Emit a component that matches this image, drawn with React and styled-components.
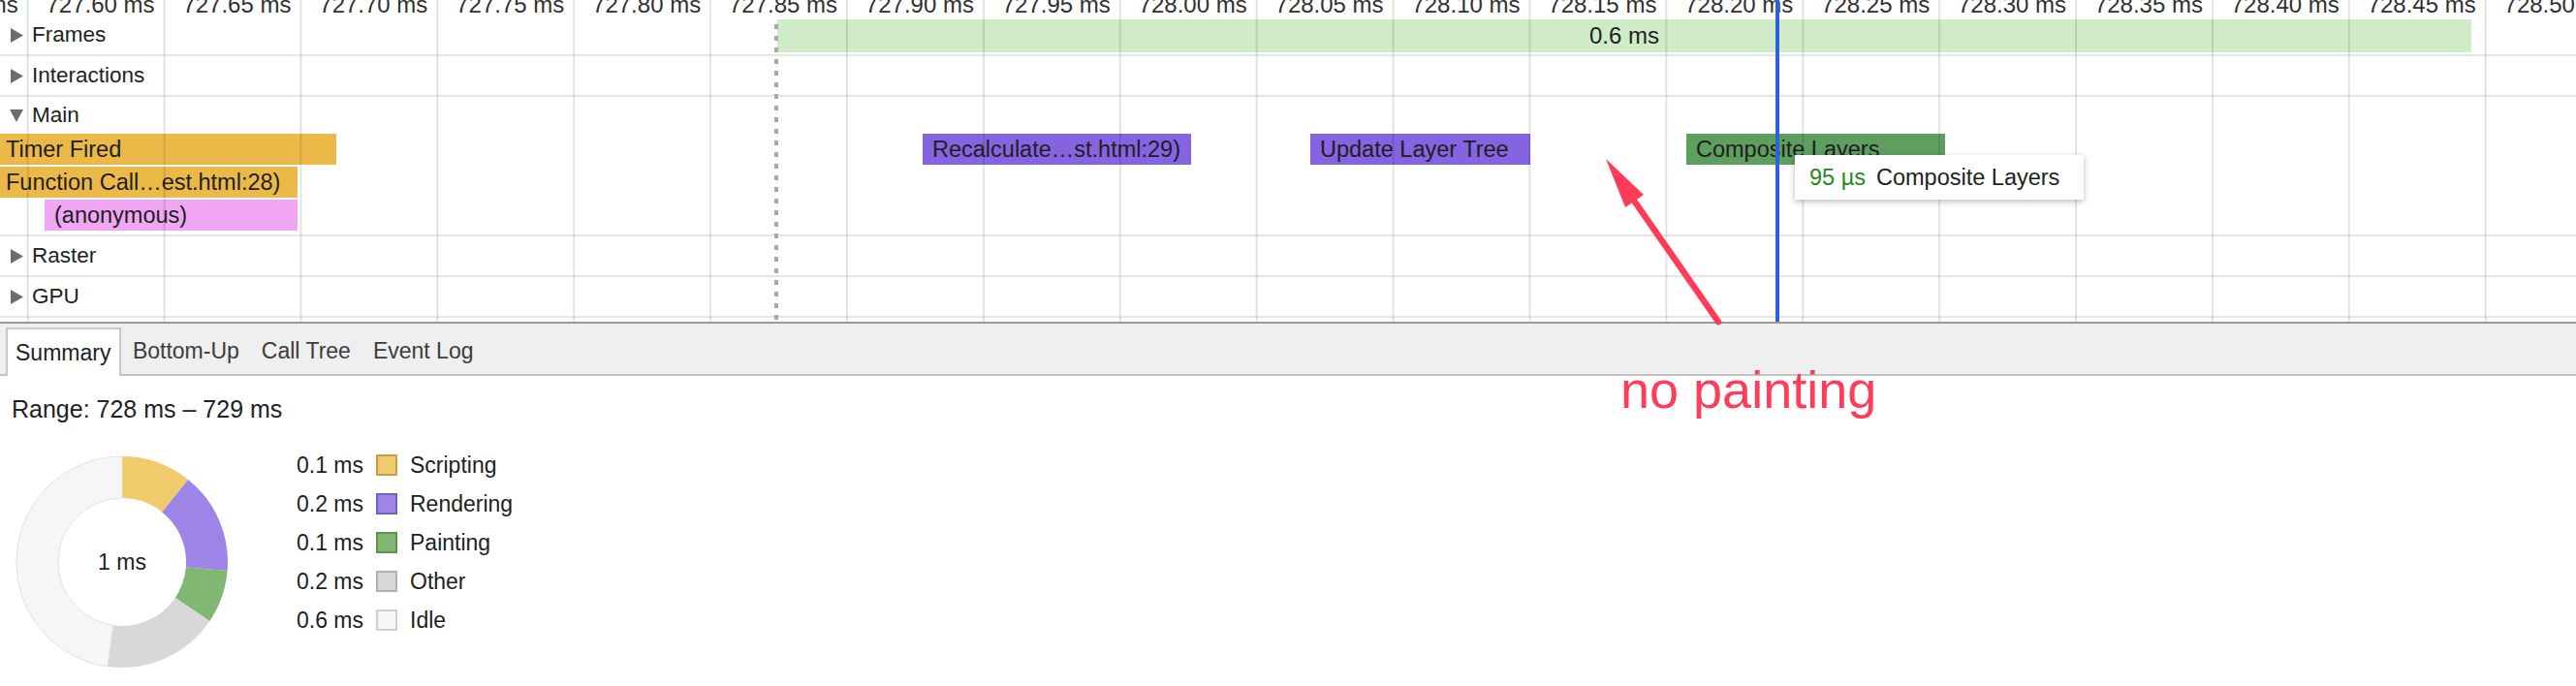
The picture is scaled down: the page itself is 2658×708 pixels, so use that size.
import React from 'react';
import styled, { createGlobalStyle } from 'styled-components';

const GRID_START = 28.7;
const GRID_STEP = 140.9;

const GlobalStyle = createGlobalStyle`
  html, body { margin: 0; padding: 0; background: #fff; }
  body { font-family: "Liberation Sans", Arial, sans-serif; }
  * { box-sizing: border-box; }
`;

const Page = styled.div`
  position: relative;
  width: 2658px;
  height: 708px;
  overflow: hidden;
  background: #fff;
  color: #222;
`;

/* ---------- timeline ---------- */
const Timeline = styled.div`
  position: relative;
  height: 334px;
  border-bottom: 2px solid #999;
  overflow: hidden;
`;

const Grid = styled.div`
  position: absolute;
  inset: 0;
  pointer-events: none;
  z-index: 2;
  background-image: linear-gradient(90deg, rgba(0, 0, 0, 0.11) 0 2px, transparent 2px);
  background-size: ${GRID_STEP}px 100%;
  background-position: ${GRID_START - 1}px 0;
  background-repeat: repeat-x;
`;

const Ruler = styled.div`
  display: flex;
  height: 16px;
  margin-left: ${GRID_START - GRID_STEP}px;
`;

const Tick = styled.div`
  flex: 0 0 ${GRID_STEP}px;
  text-align: right;
  padding-right: 10px;
  font-size: 24px;
  line-height: 16px;
  margin-top: -3px;
  white-space: nowrap;
  color: #303030;
`;

const Track = styled.div`
  position: relative;
  border-bottom: 2px solid #e6e6e6;
`;

const TrackHeader = styled.div`
  position: relative;
  z-index: 3;
  display: flex;
  align-items: center;
  gap: 9px;
  height: ${(p) => p.$h || 40}px;
  padding-left: 10px;
  font-size: 22.5px;
  color: #222;
`;

const Caret = styled.svg`
  width: 14px;
  height: 15px;
  flex: 0 0 auto;
`;

const FrameBar = styled.div`
  position: absolute;
  top: 4px;
  height: 34px;
  background: #cfebc8;
  display: flex;
  align-items: center;
  justify-content: center;
  font-size: 24px;
  color: #222;
  z-index: 1;
`;

const FlameRows = styled.div`
  display: flex;
  flex-direction: column;
  gap: 2px;
  padding-bottom: 4px;
`;

const FlameRow = styled.div`
  position: relative;
  height: 32px;
`;

const Slice = styled.div`
  position: absolute;
  top: 0;
  height: 32px;
  line-height: 32px;
  padding-left: ${(p) => (p.$clipped ? 6 : 10)}px;
  font-size: 23.5px;
  white-space: nowrap;
  overflow: hidden;
  color: #1e1e1e;
  background: ${(p) => p.$color};
  z-index: 1;
`;

const DashedMarker = styled.div`
  position: absolute;
  left: 799px;
  top: 25px;
  width: 4px;
  height: 307px;
  background: repeating-linear-gradient(180deg, #a8a8a8 0 5px, transparent 5px 12px);
  z-index: 3;
`;

const Cursor = styled.div`
  position: absolute;
  left: 1832px;
  top: 0;
  width: 4px;
  height: 332px;
  background: #2c61d8;
  z-index: 4;
`;

const Tooltip = styled.div`
  position: absolute;
  left: 1852px;
  top: 160px;
  width: 298px;
  height: 46px;
  display: flex;
  align-items: center;
  gap: 11px;
  padding-left: 15px;
  background: #fff;
  box-shadow: 0 2px 6px rgba(0, 0, 0, 0.28);
  font-size: 23.5px;
  color: #222;
  white-space: nowrap;
  z-index: 5;
`;

const Duration = styled.span`
  color: #228b22;
`;

/* ---------- bottom panel ---------- */
const TabBar = styled.div`
  display: flex;
  align-items: flex-end;
  height: 54px;
  padding-left: 6px;
  background: #efefef;
  border-bottom: 2px solid #c4c4c4;
`;

const Tab = styled.div`
  display: flex;
  align-items: center;
  height: ${(p) => (p.$active ? 50 : 48)}px;
  margin-bottom: ${(p) => (p.$active ? -2 : 0)}px;
  padding: ${(p) => (p.$active ? '0 9px 0 8px' : '0 11.5px')};
  font-size: 23px;
  color: ${(p) => (p.$active ? '#222' : '#3c3c3c')};
  background: ${(p) => (p.$active ? '#fff' : 'transparent')};
  border: ${(p) => (p.$active ? '2px solid #c8c8c8' : 'none')};
  border-bottom: none;
  white-space: nowrap;
`;

const SummaryPane = styled.div`
  padding: 19px 12px 0;
`;

const RangeLine = styled.div`
  font-size: 25px;
  line-height: 30px;
  color: #222;
`;

const Breakdown = styled.div`
  display: flex;
  align-items: flex-start;
  margin-top: 33px;
  padding-left: 4px;
`;

const DonutWrap = styled.div`
  position: relative;
  width: 220px;
  height: 220px;
  flex: 0 0 auto;
`;

const DonutLabel = styled.div`
  position: absolute;
  inset: 0;
  display: flex;
  align-items: center;
  justify-content: center;
  font-size: 23px;
  color: #222;
`;

const Legend = styled.div`
  display: grid;
  grid-template-columns: 90px 22px auto;
  grid-auto-rows: 40px;
  column-gap: 13px;
  align-items: center;
  margin-top: -10px;
  margin-left: 49px;
  font-size: 23px;
  color: #222;
`;

const Value = styled.div`
  text-align: right;
  white-space: nowrap;
`;

const Swatch = styled.div`
  width: 22px;
  height: 22px;
  background: ${(p) => p.$fill};
  border: 2px solid ${(p) => p.$border};
`;

/* ---------- annotation ---------- */
const Annotation = styled.svg`
  position: absolute;
  left: 0;
  top: 0;
  width: 2658px;
  height: 708px;
  pointer-events: none;
  z-index: 10;
`;

const Note = styled.div`
  position: absolute;
  left: 1672px;
  top: 371px;
  font-family: "Liberation Sans", Arial, sans-serif;
  font-size: 54px;
  line-height: 62px;
  color: #ff3d5a;
  white-space: nowrap;
  z-index: 10;
`;

/* ---------- data ---------- */
const ticks = Array.from({ length: 20 }, (_, k) => (727.55 + 0.05 * k).toFixed(2) + ' ms');

const flame = [
  [
    { label: 'Timer Fired', left: 0, right: 347, color: '#ebb947', clipped: true },
    { label: 'Recalculate…st.html:29)', left: 952, right: 1229, color: '#8663e0' },
    { label: 'Update Layer Tree', left: 1352, right: 1579, color: '#8663e0' },
    { label: 'Composite Layers', left: 1740, right: 2007, color: '#5e9f60' },
  ],
  [{ label: 'Function Call…est.html:28)', left: 0, right: 307, color: '#ebb947', clipped: true }],
  [{ label: '(anonymous)', left: 46, right: 307, color: '#f0a6f2' }],
];

const categories = [
  { value: '0.1 ms', name: 'Scripting', fill: '#f0ca6b', border: '#c29f48', from: 0, to: 38.7 },
  { value: '0.2 ms', name: 'Rendering', fill: '#9e84e6', border: '#7660c2', from: 38.7, to: 94.8 },
  { value: '0.1 ms', name: 'Painting', fill: '#80b873', border: '#5d9152', from: 94.8, to: 124 },
  { value: '0.2 ms', name: 'Other', fill: '#d8d8d8', border: '#b2b2b2', from: 124, to: 188 },
  { value: '0.6 ms', name: 'Idle', fill: '#f6f6f6', border: '#cfcfcf', from: 188, to: 360 },
];

function pt(cx, cy, r, a) {
  const rad = (a * Math.PI) / 180;
  return [cx + r * Math.sin(rad), cy - r * Math.cos(rad)];
}

function arcPath(a0, a1, R = 109, r = 66, cx = 110, cy = 110) {
  const large = a1 - a0 > 180 ? 1 : 0;
  const end = a1 >= 360 ? 359.99 : a1;
  const [x0, y0] = pt(cx, cy, R, a0);
  const [x1, y1] = pt(cx, cy, R, end);
  const [x2, y2] = pt(cx, cy, r, end);
  const [x3, y3] = pt(cx, cy, r, a0);
  return `M${x0} ${y0} A${R} ${R} 0 ${large} 1 ${x1} ${y1} L${x2} ${y2} A${r} ${r} 0 ${large} 0 ${x3} ${y3} Z`;
}

function CaretIcon({ open }) {
  return (
    <Caret viewBox="0 0 14 15">
      {open ? <polygon points="0,1 14,1 7,14" fill="#6c6c6c" /> : <polygon points="1,0 14,7.5 1,15" fill="#6c6c6c" />}
    </Caret>
  );
}

export default function App() {
  return (
    <Page>
      <GlobalStyle />
      <Timeline>
        <Ruler>
          {ticks.map((t) => (
            <Tick key={t}>{t}</Tick>
          ))}
        </Ruler>

        <Track>
          <TrackHeader>
            <CaretIcon />
            Frames
          </TrackHeader>
          <FrameBar style={{ left: 802, width: 2550 - 802 }}>0.6 ms</FrameBar>
        </Track>

        <Track>
          <TrackHeader>
            <CaretIcon />
            Interactions
          </TrackHeader>
        </Track>

        <Track>
          <TrackHeader $h={38}>
            <CaretIcon open />
            Main
          </TrackHeader>
          <FlameRows>
            {flame.map((row, i) => (
              <FlameRow key={i}>
                {row.map((s) => (
                  <Slice
                    key={s.label}
                    $color={s.color}
                    $clipped={s.clipped}
                    style={{ left: s.left, width: s.right - s.left }}
                  >
                    {s.label}
                  </Slice>
                ))}
              </FlameRow>
            ))}
          </FlameRows>
        </Track>

        <Track>
          <TrackHeader>
            <CaretIcon />
            Raster
          </TrackHeader>
        </Track>

        <Track>
          <TrackHeader>
            <CaretIcon />
            GPU
          </TrackHeader>
        </Track>

        <Grid />
        <DashedMarker />
        <Cursor />
        <Tooltip>
          <Duration>95 µs</Duration>
          <span>Composite Layers</span>
        </Tooltip>
      </Timeline>

      <TabBar>
        <Tab $active>Summary</Tab>
        <Tab>Bottom-Up</Tab>
        <Tab>Call Tree</Tab>
        <Tab>Event Log</Tab>
      </TabBar>

      <SummaryPane>
        <RangeLine>Range: 728 ms – 729 ms</RangeLine>
        <Breakdown>
          <DonutWrap>
            <svg width="220" height="220" viewBox="0 0 220 220">
              {categories.map((c) => (
                <path
                  key={c.name}
                  d={arcPath(c.from, c.to)}
                  fill={c.fill}
                  stroke={c.name === 'Idle' ? '#e2e2e2' : 'none'}
                  strokeWidth="1"
                />
              ))}
            </svg>
            <DonutLabel>1 ms</DonutLabel>
          </DonutWrap>
          <Legend>
            {categories.map((c) => (
              <React.Fragment key={c.name}>
                <Value>{c.value}</Value>
                <Swatch $fill={c.fill} $border={c.border} />
                <div>{c.name}</div>
              </React.Fragment>
            ))}
          </Legend>
        </Breakdown>
      </SummaryPane>

      <Annotation viewBox="0 0 2658 708">
        <line x1="1686" y1="207" x2="1773" y2="332" stroke="#ff3b5a" strokeWidth="6.5" strokeLinecap="round" />
        <polygon points="1657,164 1677,214 1696,201" fill="#ff3b5a" />
      </Annotation>
      <Note>no painting</Note>
    </Page>
  );
}
